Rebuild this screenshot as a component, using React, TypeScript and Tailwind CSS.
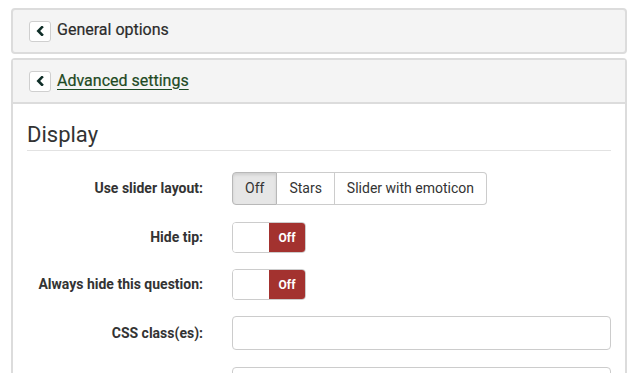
import React from "react";

function Chevron() {
  return (
    <svg width="8" height="10" viewBox="0 0 8 10">
      <path d="M6 1.2 L2.3 5 L6 8.8" stroke="#0f2e28" strokeWidth="2.6" fill="none" strokeLinecap="square" />
    </svg>
  );
}

function BackBtn() {
  return (
    <span className="flex items-center justify-center w-[22px] h-[21px] bg-white border border-[#cfcfcf] rounded-[3px]">
      <Chevron />
    </span>
  );
}

function Toggle() {
  return (
    <div className="flex w-[74px] h-[31px] border border-[#cccccc] rounded-[4px] overflow-hidden">
      <div className="w-[36px] bg-white"></div>
      <div className="flex-1 bg-[#a3322f] text-white text-[12px] font-bold flex items-center justify-center">Off</div>
    </div>
  );
}

function Row({ label, children, className }: { label: string; children: React.ReactNode; className?: string }) {
  return (
    <div className={"flex items-center " + (className ?? "")}>
      <div className="w-[176px] text-right text-[14px] font-bold text-[#333]">{label}</div>
      <div className="ml-[29px] flex-1">{children}</div>
    </div>
  );
}

export default function App() {
  return (
    <div className="w-[639px] h-[373px] overflow-hidden bg-white pl-[11px] pr-[12px] pt-[8px]" style={{ fontFamily: "Roboto, 'Liberation Sans', sans-serif" }}>
      <div className="h-[46px] bg-[#f4f4f4] border-2 border-[#dcdcdc] rounded-[4px] flex items-center pl-[16px] gap-[6px]">
        <BackBtn />
        <span className="text-[16px] text-[#2b2b2b] leading-[20px] -mt-[2px] [-webkit-text-stroke:0.2px_#2b2b2b]">General options</span>
      </div>
      <div className="mt-[4px] border-2 border-[#dcdcdc] border-b-0 rounded-t-[4px] h-[400px]">
        <div className="h-[44px] bg-[#f4f4f4] border-b-2 border-[#dcdcdc] flex items-center pl-[16px] gap-[6px]">
          <BackBtn />
          <span className="text-[16px] text-[#1e4a24] underline underline-offset-[3px] leading-[20px] -mt-[1px] [-webkit-text-stroke:0.2px_#1e4a24]">Advanced settings</span>
        </div>
        <div className="bg-white pl-[14px] pr-[14px] pt-[17px]">
          <div className="text-[22px] text-[#333] leading-[28px] pb-[1px] border-b border-[#e2e2e2]">Display</div>
          <div className="flex flex-col mt-[21px]">
            <Row label="Use slider layout:">
              <div className="flex h-[33px] text-[14px] text-[#333]">
                <div className="px-[12px] flex items-center bg-[#e6e6e6] border border-[#b8b8b8] rounded-l-[4px] shadow-[inset_0_2px_3px_rgba(0,0,0,0.1)]">Off</div>
                <div className="px-[12px] flex items-center border-y border-r border-[#cccccc]">Stars</div>
                <div className="px-[12px] flex items-center border-y border-r border-[#cccccc] rounded-r-[4px]">Slider with emoticon</div>
              </div>
            </Row>
            <Row label="Hide tip:" className="mt-[17px]">
              <Toggle />
            </Row>
            <Row label="Always hide this question:" className="mt-[16px]">
              <Toggle />
            </Row>
            <Row label="CSS class(es):" className="mt-[16px]">
              <div className="h-[34px] border border-[#cccccc] rounded-[4px] w-full"></div>
            </Row>
            <Row label="" className="mt-[17px]">
              <div className="h-[34px] border border-[#cccccc] rounded-[4px] w-full"></div>
            </Row>
          </div>
        </div>
      </div>
    </div>
  );
}
